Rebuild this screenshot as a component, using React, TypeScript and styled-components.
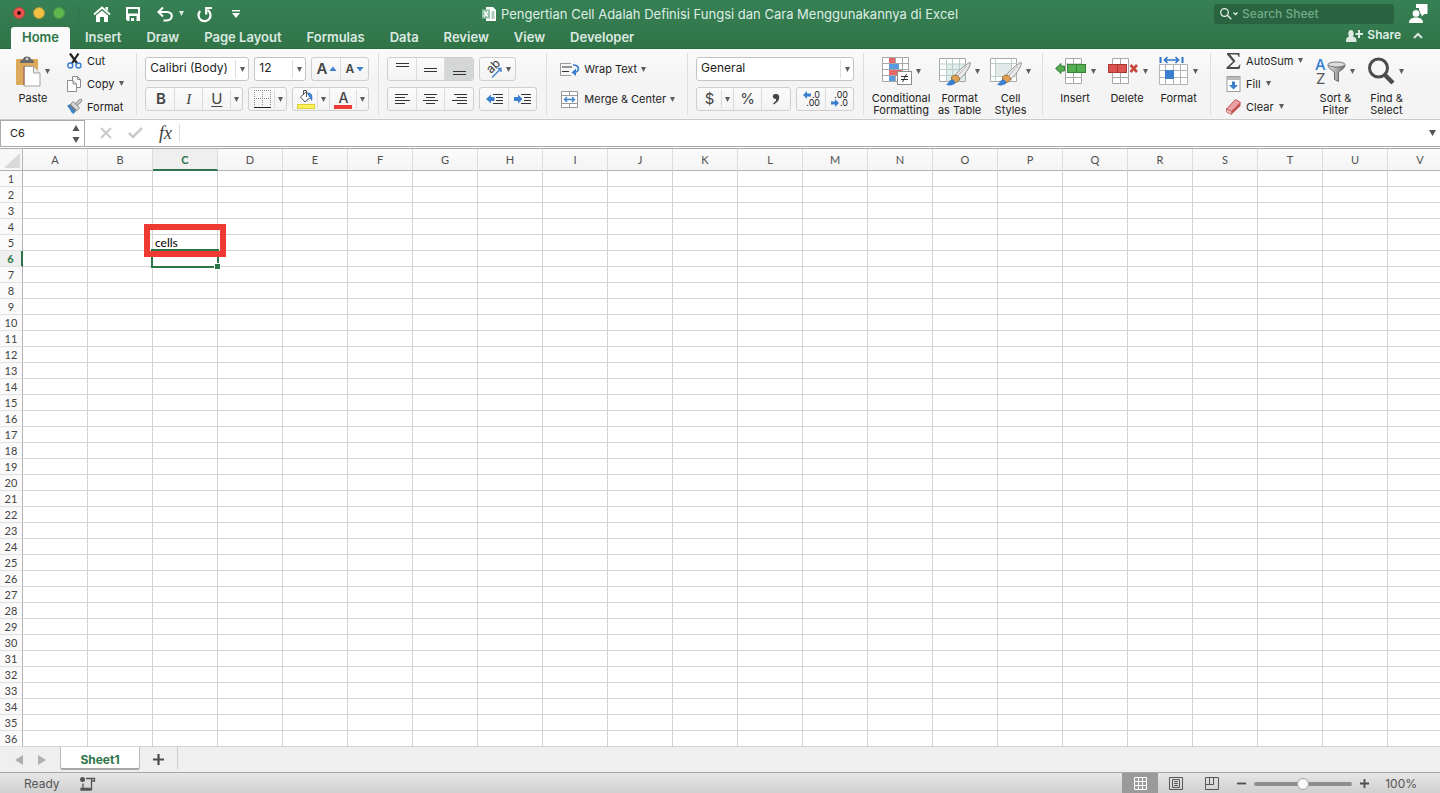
import React from "react";
import styled, { createGlobalStyle, css } from "styled-components";

const UI = `Inter, "Liberation Sans", sans-serif`;
const SHEET = `Lato, "Liberation Sans", sans-serif`;

const GlobalStyle = createGlobalStyle`
  *, *::before, *::after { box-sizing: border-box; }
  body { margin: 0; background: #fff; font-family: ${UI}; color: #222; }
  button, input, select { font: inherit; color: inherit; margin: 0; }
  svg { display: block; flex: none; overflow: visible; }
`;

const Window = styled.div`
  display: flex;
  flex-direction: column;
  min-height: 100vh;
  overflow: hidden;
`;

/* ---------- shared controls ---------- */

const PlainButton = styled.button`
  display: flex;
  align-items: center;
  padding: 0;
  border: 0;
  background: none;
`;

const Caret = ({ color = "#5c5c5c" }: { color?: string }) => (
  <svg width="5" height="5" viewBox="0 0 5 5" aria-hidden="true">
    <path d="M0 0H5L2.5 5Z" fill={color} />
  </svg>
);

/* ---------- title bar ---------- */

const Header = styled.header`
  height: 49px;
  background: linear-gradient(#378055, #307447);
  border-bottom: 1px solid #2a6640;
  color: #dfeee5;
`;

const TitleRow = styled.div`
  display: grid;
  grid-template-columns: 1fr auto 1fr;
  align-items: center;
  height: 27px;
`;

const QuickTools = styled.div`
  display: flex;
  align-items: center;
  padding-left: 13px;
`;

const Lights = styled.div`
  display: flex;
  align-items: center;
  gap: 8px;
  height: 15px;
  padding: 0 13px 2px 0;
  margin-right: 14px;
  border-right: 1px solid #2f7149;
`;

const Light = styled.button<{ $fill: string; $rim: string }>`
  display: grid;
  place-items: center;
  width: 12px;
  height: 12px;
  padding: 0;
  border: 1px solid ${(p) => p.$rim};
  border-radius: 50%;
  background: ${(p) => p.$fill};
`;

const Dot = styled.span`
  width: 4px;
  height: 4px;
  border-radius: 50%;
  background: #3c0a08;
`;

const ToolButton = styled(PlainButton)<{ $gap: number }>`
  margin-right: ${(p) => p.$gap}px;
`;

const DocTitle = styled.h1`
  display: flex;
  align-items: center;
  gap: 5px;
  margin: 0;
  font-size: 13px;
  font-weight: 400;
  line-height: 16px;
  white-space: nowrap;
`;

const TitleRight = styled.div`
  display: flex;
  align-items: center;
  justify-content: flex-end;
  gap: 15px;
  padding-right: 12px;
`;

const SearchBox = styled.label`
  display: flex;
  align-items: center;
  width: 180px;
  height: 20px;
  padding-left: 6px;
  gap: 3px;
  border-radius: 3px;
  background: #2a6340;
`;

const SearchInput = styled.input`
  flex: 1;
  min-width: 0;
  padding: 0;
  border: 0;
  background: none;
  font-size: 12px;
  font-weight: 500;
  line-height: 16px;
  &::placeholder { color: #72ab87; opacity: 1; }
`;

const TabRow = styled.div`
  display: flex;
  justify-content: space-between;
  height: 22px;
`;

const Tabs = styled.nav`
  display: flex;
  padding-left: 11px;
`;

const Tab = styled.button<{ $active?: boolean }>`
  padding: 0 13px 3px 12px;
  border: 0;
  border-radius: 3px 3px 0 0;
  background: none;
  color: #dbe9e0;
  font-size: 13px;
  font-weight: 600;
  line-height: 18px;
  white-space: nowrap;
  ${(p) =>
    p.$active &&
    css`
      padding: 0 11px 3px;
      margin-right: 3px;
      background: #fafafa;
      color: #2b7547;
    `}
`;

const ShareArea = styled.div`
  display: flex;
  align-items: center;
  gap: 12px;
  padding-right: 17px;
  padding-bottom: 6px;
`;

const ShareButton = styled(PlainButton)`
  gap: 4px;
  font-size: 12px;
  font-weight: 600;
  line-height: 16px;
`;

/* ---------- ribbon ---------- */

const Ribbon = styled.section`
  display: flex;
  height: 71px;
  background: linear-gradient(#fafafa, #f4f4f4 30px);
  border-bottom: 1px solid #cbcbcb;
  overflow: hidden;
`;

const Group = styled.div<{ $left?: number; $right?: number; $gap?: number }>`
  display: flex;
  flex: none;
  gap: ${(p) => p.$gap ?? 10}px;
  padding-left: ${(p) => p.$left ?? 8}px;
  padding-right: ${(p) => p.$right ?? 9}px;
`;

const Divider = styled.div`
  flex: none;
  width: 1px;
  height: 62px;
  margin-top: 4px;
  background: #dedede;
`;

const Rows = styled.div`
  display: flex;
  flex-direction: column;
  gap: 6px;
  padding-top: 8px;
`;

const Row = styled.div`
  display: flex;
  gap: 5px;
  height: 24px;
`;

const ButtonSet = styled.div`
  display: flex;
  height: 24px;
  border: 1px solid #cfcfcf;
  border-radius: 3px;
  background: linear-gradient(#fbfbfb, #f3f3f3);
  overflow: hidden;
`;

const SetButton = styled.button<{ $w?: number; $pressed?: boolean }>`
  display: flex;
  align-items: center;
  justify-content: center;
  gap: 2px;
  width: ${(p) => p.$w ?? 29}px;
  padding: 0;
  border: 0;
  border-left: 1px solid #dcdcdc;
  background: ${(p) => (p.$pressed ? "#d5d7d6" : "none")};
  color: #444;
  font-size: 15px;
  line-height: 20px;
  &:first-child { border-left-color: transparent; }
`;

const CaretButton = styled.button`
  display: flex;
  align-items: center;
  justify-content: center;
  align-self: center;
  width: 12px;
  height: 18px;
  padding: 0;
  border: 0;
  border-left: 1px solid #dcdcdc;
  background: none;
`;

const SelectBox = styled.label<{ $w: number }>`
  display: grid;
  grid-template-columns: 1fr 13px;
  align-items: center;
  width: ${(p) => p.$w}px;
  height: 24px;
  border: 1px solid #c4c4c4;
  border-radius: 3px;
  background: #fff;
`;

const Select = styled.select`
  grid-area: 1 / 1 / 2 / 3;
  width: 100%;
  height: 22px;
  padding: 0 14px 2px 4px;
  border: 0;
  background: none;
  appearance: none;
  font-size: 12px;
  line-height: 20px;
`;

const SelectCaret = styled.span`
  grid-area: 1 / 2;
  display: flex;
  align-items: center;
  justify-content: center;
  height: 18px;
  border-left: 1px solid #dedede;
  pointer-events: none;
`;

const MenuList = styled.div`
  display: flex;
  flex-direction: column;
`;

const MenuButton = styled(PlainButton)<{ $tall?: boolean }>`
  height: ${(p) => (p.$tall ? 24 : 23)}px;
  gap: ${(p) => (p.$tall ? 4 : 5)}px;
  font-size: 11px;
  line-height: 14px;
  color: #222;
  white-space: nowrap;
`;

const BigButton = styled.button<{ $w: number }>`
  display: flex;
  flex-direction: column;
  align-items: center;
  width: ${(p) => p.$w}px;
  padding: 6px 0 0;
  border: 0;
  background: none;
  color: #222;
`;

const BigIcon = styled.span`
  display: flex;
  align-items: center;
  gap: 4px;
  height: 32px;
  margin-bottom: 5px;
`;

const BigLabel = styled.span`
  font-size: 11px;
  line-height: 12px;
  white-space: pre;
  text-align: center;
`;

const Glyph = styled.span<{ $italic?: boolean; $bold?: boolean; $underline?: boolean; $small?: boolean }>`
  font-family: ${(p) => (p.$italic ? `"Liberation Serif", serif` : UI)};
  font-size: ${(p) => (p.$small ? 12 : 15)}px;
  font-style: ${(p) => (p.$italic ? "italic" : "normal")};
  font-weight: ${(p) => (p.$bold ? 600 : 400)};
  text-decoration: ${(p) => (p.$underline ? "underline" : "none")};
  text-underline-offset: 2px;
`;

/* ---------- formula bar ---------- */

const FormulaBar = styled.div`
  display: flex;
  height: 29px;
  border-bottom: 3px double #a9a9a9;
  background: #fff;
`;

const NameBox = styled.label`
  display: flex;
  align-items: center;
  width: 85px;
  padding-right: 4px;
  border: 1px solid #a9a9a9;
  border-width: 1px 1px 0;
`;

const NameInput = styled.input`
  flex: 1;
  min-width: 0;
  padding: 0 0 2px 9px;
  border: 0;
  background: none;
  font-size: 11px;
  line-height: 16px;
`;

const FormulaTools = styled.div`
  display: flex;
  align-items: center;
  gap: 16px;
  padding: 0 7px 0 15px;
  margin: 4px 0;
  border-right: 1px solid #dedede;
`;

const FxButton = styled(PlainButton)`
  font-family: "Liberation Serif", serif;
  font-style: italic;
  font-size: 18px;
  line-height: 18px;
  color: #3c3c3c;
`;

const FormulaInput = styled.input`
  flex: 1;
  min-width: 0;
  border: 0;
  padding: 0 8px;
  background: none;
  font-size: 12px;
`;

const ExpandButton = styled(PlainButton)`
  padding-right: 4px;
`;

/* ---------- grid ---------- */

const Sheet = styled.main`
  position: relative;
  flex: 1;
  overflow: hidden;
  font-family: ${SHEET};
`;

const Table = styled.table`
  width: 1453px;
  table-layout: fixed;
  border-collapse: separate;
  border-spacing: 0;
`;

const Corner = styled.th`
  width: 23px;
  height: 22px;
  padding: 0 2px 2px 4px;
  vertical-align: bottom;
  border-right: 1px solid #b4b4b4;
  border-bottom: 1px solid #b4b4b4;
  background: #f7f7f7;
`;

const ColHead = styled.th<{ $active?: boolean }>`
  width: 65px;
  height: 22px;
  padding: ${(p) => (p.$active ? "2px 0 0" : "1px 0 0")};
  border-right: 1px solid #dcdcdc;
  border-bottom: ${(p) => (p.$active ? "2px solid #2b7547" : "1px solid #b4b4b4")};
  background: ${(p) => (p.$active ? "#efefef" : "linear-gradient(#fbfbfb, #f4f4f4)")};
  color: ${(p) => (p.$active ? "#2b7547" : "#505050")};
  font-size: 11px;
  font-weight: ${(p) => (p.$active ? 700 : 400)};
  line-height: 16px;
`;

const RowHead = styled.th<{ $active?: boolean }>`
  height: 16px;
  padding: 0;
  border-right: ${(p) => (p.$active ? "2px solid #2b7547" : "1px solid #b4b4b4")};
  border-bottom: 1px solid #e2e2e2;
  background: ${(p) => (p.$active ? "#efefef" : "#fafafa")};
  color: ${(p) => (p.$active ? "#2b7547" : "#444")};
  font-size: 11px;
  font-weight: ${(p) => (p.$active ? 700 : 400)};
  line-height: 15px;
  text-align: center;
`;

const Cell = styled.td`
  height: 16px;
  padding: 0 2px;
  border-right: 1px solid #d3d3d3;
  border-bottom: 1px solid #d3d3d3;
  background: #fff;
  color: #000;
  font-size: 12px;
  line-height: 15px;
`;

const Selection = styled.div`
  position: absolute;
  left: 151px;
  top: 100px;
  width: 68px;
  height: 19px;
  border: 2px solid #2b7547;
`;

const FillHandle = styled.span`
  position: absolute;
  right: -4px;
  bottom: -4px;
  width: 7px;
  height: 7px;
  border: 1px solid #fff;
  background: #2b7547;
`;

const Highlight = styled.div`
  position: absolute;
  left: 144px;
  top: 75px;
  width: 82px;
  height: 33px;
  border: 6px solid #ee3a32;
`;

/* ---------- bottom bars ---------- */

const SheetBar = styled.div`
  display: flex;
  height: 25px;
  background: #efefef;
`;

const SheetNav = styled.div`
  display: flex;
  align-items: center;
  gap: 15px;
  padding: 0 14px 0 15px;
`;

const SheetTab = styled.button`
  width: 80px;
  height: 23px;
  padding: 3px 0 0;
  border: 1px solid #bdbdbd;
  border-top: 0;
  border-bottom: 2px solid #a6a6a6;
  border-radius: 0 0 3px 3px;
  background: #fff;
  color: #2b7547;
  font-size: 12px;
  font-weight: 700;
`;

const AddSheet = styled(PlainButton)`
  justify-content: center;
  width: 38px;
  height: 22px;
  padding-top: 3px;
  border-right: 1px solid #cfcfcf;
`;

const StatusBar = styled.footer`
  display: flex;
  align-items: center;
  justify-content: space-between;
  height: 22px;
  border-top: 1px solid #a6a6a6;
  background: linear-gradient(#e6e6e6, #cfcfcf);
  color: #555;
  font-size: 12px;
  line-height: 16px;
`;

const StatusLeft = styled.div`
  display: flex;
  align-items: center;
  gap: 20px;
  padding-left: 24px;
`;

const StatusRight = styled.div`
  display: flex;
  align-items: center;
  align-self: stretch;
  padding-right: 23px;
`;

const ViewButton = styled.button<{ $active?: boolean }>`
  display: flex;
  align-items: center;
  justify-content: center;
  align-self: stretch;
  width: 36px;
  padding: 0;
  border: 0;
  background: ${(p) => (p.$active ? "#9a9a9a" : "none")};
`;

const ZoomControls = styled.div`
  display: flex;
  align-items: center;
  gap: 8px;
  margin-left: 7px;
`;

const ZoomSlider = styled.input`
  width: 98px;
  height: 14px;
  margin: 0;
  appearance: none;
  background: none;
  &::-webkit-slider-runnable-track {
    height: 4px;
    border-radius: 2px;
    background: #8e8e8e;
  }
  &::-webkit-slider-thumb {
    appearance: none;
    width: 12px;
    height: 12px;
    margin-top: -4px;
    border: 1px solid #a0a0a0;
    border-radius: 50%;
    background: #fafafa;
  }
`;

const ZoomValue = styled.output`
  margin-left: 8px;
`;

/* ---------- icons ---------- */

const IconHome = () => (
  <svg width="18" height="16" viewBox="0 0 18 16">
    <path d="M1 8.5 9 1.5 17 8.5" fill="none" stroke="#fff" strokeWidth="1.800" />
    <path d="M12.500 1H15V5L12.500 3Z" fill="#fff" />
    <path d="M3 9.500 9 4.500 15 9.500V16H11V11H7V16H3Z" fill="#fff" />
  </svg>
);

const IconSave = () => (
  <svg width="14" height="14" viewBox="0 0 14 14">
    <path fillRule="evenodd" fill="#fff" d="M0 0H14V14H1.500L0 12.500ZM2 2V6.500H12V2ZM3.500 9V14H5V11H8V14H10.500V9Z" />
  </svg>
);

const IconUndo = () => (
  <svg width="17" height="16" viewBox="0 0 17 16" fill="none" stroke="#fff" strokeWidth="2">
    <path d="M2 6H10C16.500 6 16.500 14 9.500 14.500H6.500" />
    <path d="M6 1.500 1.500 6 6 10.500" />
  </svg>
);

const IconRedo = () => (
  <svg width="16" height="16" viewBox="0 0 16 16" fill="none" stroke="#fff" strokeWidth="2.200">
    <path d="M3.200 5A6 6 0 1 0 10.500 4" />
    <path d="M9.200 8.500V2H15" />
  </svg>
);

const IconCustomize = () => (
  <svg width="8" height="8" viewBox="0 0 8 8">
    <path d="M0 0H8V1.500H0ZM0 3H8L4 8Z" fill="#fff" />
  </svg>
);

const IconWorkbook = () => (
  <svg width="14" height="14" viewBox="0 0 14 14">
    <path d="M4 0H11L14 3V14H4Z" fill="#fff" />
    <path d="M9.500 5H12.500M9.500 7H12.500M9.500 9H12.500M9.500 11H12.500" stroke="#5f9f7a" />
    <path d="M0 2.500H8V11.500H0Z" fill="#8fc0a2" />
    <path d="M2 4.500 6 9.500M6 4.500 2 9.500" stroke="#fff" strokeWidth="1.300" />
  </svg>
);

const IconSearch = () => (
  <svg width="19" height="12" viewBox="0 0 19 12" fill="none" stroke="#e6f1ea" strokeWidth="1.300">
    <circle cx="4.500" cy="4.500" r="3.800" />
    <path d="M7.300 7.300 11.300 11.300M13.500 4.500 15.500 6.500 17.500 4.500" />
  </svg>
);

const IconPerson = () => (
  <svg width="19" height="19" viewBox="0 0 19 19">
    <path d="M7 0H18.500V10H15.500L12.500 12.500V10H10V4H7Z" fill="#fff" />
    <circle cx="7" cy="9.500" r="4" fill="#fff" stroke="#347a50" />
    <path d="M0 19C0 15 3 13.500 7 13.500S14 15 14 19Z" fill="#fff" />
  </svg>
);

const IconShare = () => (
  <svg width="17" height="13" viewBox="0 0 17 13" fill="#dbe9e0">
    <path d="M5 1C8.500 1 8 7 6.800 7.500 10 8.500 10.500 9 10.500 13H0C0 9 .5 8.500 3.200 7.500 2 7 1.500 1 5 1Z" />
    <path d="M12 1H14V4H17V6H14V9H12V6H9.500V4H12Z" />
  </svg>
);

const IconChevronUp = () => (
  <svg width="10" height="7" viewBox="0 0 10 7" fill="none" stroke="#dbe9e0" strokeWidth="2">
    <path d="M1 6 5 2 9 6" />
  </svg>
);

const IconPaste = () => (
  <svg width="25" height="32" viewBox="0 0 25 32">
    <rect x="0" y="4" width="22" height="26" rx="1" fill="#dda95b" />
    <path d="M4 8C4 5 6 4.500 7 4.500 7 .5 15 .5 15 4.500 16 4.500 18 5 18 8Z" fill="#6a6a6a" />
    <circle cx="11" cy="4" r="1.300" fill="#ddd" />
    <path d="M8 11.500H17.500L24 18V31H8Z" fill="#fff" stroke="#a3a3a3" />
    <path d="M17.500 11.500V18H24" fill="#eee" stroke="#a3a3a3" />
    <path d="M8 11V30" stroke="#a5533e" />
  </svg>
);

const IconCut = () => (
  <svg width="15" height="16" viewBox="0 0 15 16" fill="none">
    <path d="M3 .5 10.500 11M11.500 .5 4.500 11" stroke="#222" strokeWidth="2.200" />
    <circle cx="3.300" cy="12.500" r="2.500" stroke="#3b7fce" strokeWidth="1.400" />
    <circle cx="11.500" cy="12.500" r="2.500" stroke="#3b7fce" strokeWidth="1.400" />
  </svg>
);

const IconCopy = () => (
  <svg width="15" height="16" viewBox="0 0 15 16" fill="#fff" stroke="#8a8a8a">
    <path d="M5.500 .5H10.500L13.500 3.500V11.500H5.500Z" />
    <path d="M.5 4.500H6L9.500 8V15.500H.5Z" />
    <path d="M6 4.500V8H9.500M10.500 .5V3.500H13.500" fill="none" />
  </svg>
);

const IconFormatPainter = () => (
  <svg width="15" height="15" viewBox="0 0 15 15">
    <path d="M13.500 1.500 9 6" stroke="#8a8a8a" strokeWidth="3.500" strokeLinecap="round" />
    <path d="M13.500 1.500 9 6" stroke="#dcdcdc" strokeWidth="1.500" strokeLinecap="round" />
    <path d="M6 2.500 12.500 9 9.500 12 3.500 5.500Z" fill="#d8d8d8" stroke="#888" />
    <path d="M3.500 5 9.500 11.500 6.500 15 4 13 3.500 11.500 0 6.500Z" fill="#3f86c8" />
    <path d="M3.500 5 9.500 11.500 8.500 12.500 2 6Z" fill="#7c7c7c" />
  </svg>
);

const IconFontSize = ({ grow }: { grow?: boolean }) => (
  <svg width="8" height="6" viewBox="0 0 8 6">
    <path d={grow ? "M.5 5H7.500L4 .5Z" : "M.5 1H7.500L4 5.500Z"} fill="#3b7fce" />
  </svg>
);

const IconBorders = () => (
  <svg width="17" height="18" viewBox="0 0 17 18" fill="none">
    <path d="M0 .5H17M0 8.500H17M.5 0V16M8.500 0V16M16.500 0V16" stroke="#8a8a8a" strokeDasharray="1 1" />
    <path d="M0 17.500H17" stroke="#222" />
  </svg>
);

const IconFill = () => (
  <svg width="18" height="20" viewBox="0 0 18 20">
    <path d="M3.500 8 9 3 14 8 8 13Z" fill="#fff" stroke="#555" />
    <path d="M6.500 6V1.500H9.500V8" fill="none" stroke="#555" />
    <path d="M10 3.500C15.500 3 16 8 15 12 13.500 11 13 9 12.500 7.500L9 12 8 12.500 12 8Z" fill="#3b7fce" />
    <rect x=".5" y="15.500" width="17" height="4" fill="#fdf151" stroke="#d9cf3c" />
  </svg>
);

const ColorLetter = styled.span`
  display: flex;
  flex-direction: column;
  align-items: center;
  width: 18px;
  border-bottom: 4px solid #ee3a32;
  font-size: 14px;
  font-weight: 500;
  line-height: 15px;
`;

type Line = [number, number, number];

const LineIcon = ({ lines }: { lines: Line[] }) => (
  <svg width="15" height="18" viewBox="0 0 15 18" stroke="#333">
    {lines.map(([x1, x2, y]) => (
      <path key={y} d={`M${x1} ${y + 0.5}H${x2}`} />
    ))}
  </svg>
);

const IconIndent = ({ out }: { out?: boolean }) => (
  <svg width="18" height="12" viewBox="0 0 18 12">
    <path d="M7 1.500H17M10 4.500H17M10 7.500H17M7 10.500H17" stroke="#333" />
    <path
      d={out ? "M0 6 5 1.500V4H8.500V8H5V10.500Z" : "M8.500 6 4 1.500V4H0V8H4V10.500Z"}
      fill="#3b7fce"
    />
  </svg>
);

const IconOrientation = () => (
  <svg width="19" height="18" viewBox="0 0 19 18">
    <text transform="translate(6 14) rotate(-45)" fontFamily="Inter, sans-serif" fontSize="12" fill="#333">
      ab
    </text>
    <path d="M7 17.500 16 8.500M12.500 8.500H16V12" fill="none" stroke="#3b7fce" strokeWidth="1.300" />
  </svg>
);

const IconWrap = () => (
  <svg width="20" height="13" viewBox="0 0 20 13" fill="none">
    <path d="M11 .5H.5V12.500H11" stroke="#9a9a9a" />
    <path d="M2 4H12M2 8.500H9" stroke="#333" />
    <path d="M13 2C20 1.500 20 9.500 14 9.500" stroke="#3b7fce" strokeWidth="1.700" />
    <path d="M16 5.500 11.500 9.500 16 13Z" fill="#3b7fce" />
  </svg>
);

const IconMerge = () => (
  <svg width="20" height="17" viewBox="-1 0 20 17">
    <path d="M.5 .5H16.500V16.500H.5ZM.5 4.500H16.500M.5 12.500H16.500M8.500 .5V4.500M8.500 12.500V16.500" fill="#fff" stroke="#9a9a9a" />
    <path d="M4 8.500H13M6 6 3.500 8.500 6 11M11 6 13.500 8.500 11 11" fill="none" stroke="#3b7fce" strokeWidth="1.300" />
  </svg>
);

const IconDecimal = ({ more }: { more?: boolean }) => (
  <svg width="20" height="18" viewBox="0 0 20 18" fontFamily="Inter, sans-serif" fontSize="9" fill="#222">
    <text x="18" y="8" textAnchor="end">{more ? ".0" : ".00"}</text>
    <text x="18" y="16" textAnchor="end">{more ? ".00" : ".0"}</text>
    <path
      d={more ? "M1 5 5 1V3.500H9V6.500H5V9Z" : "M9 13 5 9V11.500H1V14.500H5V17Z"}
      fill="#3b7fce"
    />
  </svg>
);

const IconComma = () => (
  <svg width="8" height="12" viewBox="0 0 8 12">
    <path d="M3 1C6 .5 8 2.500 7 6 6.300 8.500 4 10.500 1.500 11.500 1 10.500 1.500 10 2 9.500 3.500 8.500 4.500 7.500 4 6 0 6 0 1.500 3 1Z" fill="#444" />
  </svg>
);

const IconConditional = () => (
  <svg width="30" height="29" viewBox="0 0 30 29">
    <path d="M.5 .5H26.500V24.500H.5ZM.5 6.500H26.500M.5 12.500H26.500M.5 18.500H26.500M7.500 .5V24.500M13.500 .5V24.500M20.500 .5V24.500" fill="#fff" stroke="#a8a8a8" />
    <path d="M7 1H13V6H7ZM7 13H20V18H7Z" fill="#e2686a" />
    <path d="M7 7H17V12H7ZM7 19H13V24H7Z" fill="#5a9be0" />
    <rect x="15.500" y="14.500" width="14" height="13" fill="#fff" stroke="#8e8e8e" />
    <path d="M19 19.500H26M19 22.500H26M24.500 17 20.500 25" stroke="#333" />
  </svg>
);

const Brush = () => (
  <>
    <path d="M31 5.500C27 7 20 13 16 18.500L20.500 22.500C26 17.500 30.500 11 31.500 6Z" fill="#e9e9e9" stroke="#8e8e8e" />
    <path d="M28 9C24 12.500 21 16 18.500 20" fill="none" stroke="#b4b4b4" />
    <path d="M12.500 20C14.500 17 20 18 20.500 22 19.500 25.500 15 26.500 13 25Z" fill="#dfa254" stroke="#9c6a33" />
    <path d="M7 27.500C10 26.500 10 22.500 13 22.500 16.500 23 17.500 27 14.500 27.500 11 29 9 28.500 7 27.500Z" fill="#3b7fce" />
  </>
);

const IconTable = () => (
  <svg width="32" height="29" viewBox="0 0 32 29">
    <path d="M.5 1.500H26.500V24.500H.5Z" fill="#fff" stroke="#a8a8a8" />
    <rect x="7" y="7" width="19" height="17" fill="#dfeeea" />
    <path d="M.5 7H26.500M.5 12.500H26.500M.5 18.500H26.500M7.500 1.500V24.500M13.500 1.500V24.500M20.500 1.500V24.500" stroke="#b9cdc8" />
    <Brush />
  </svg>
);

const IconCellStyles = () => (
  <svg width="32" height="29" viewBox="0 0 32 29">
    <path d="M.5 1.500H26.500V24.500H.5Z" fill="#fff" stroke="#a8a8a8" />
    <path d="M.5 6.500H26.500M.5 19.500H26.500M5.500 1.500V24.500M21.500 1.500V24.500" stroke="#bcd0c8" />
    <rect x="6" y="7" width="15" height="12" fill="#e3e8e9" />
    <Brush />
  </svg>
);

const IconInsert = () => (
  <svg width="32" height="28" viewBox="0 0 32 28">
    <path d="M10.500 1.500H26.500V26.500H10.500ZM18.500 1.500V26.500M10.500 7H26.500M10.500 20.500H26.500" fill="#fff" stroke="#a8a8a8" />
    <rect x="12.500" y="7.500" width="18" height="8" fill="#55ad52" stroke="#3c7f3b" />
    <path d="M21.500 7.500V15.500" stroke="#3c7f3b" />
    <path d="M.5 11.500 6 6.500V9H9.500V14H6V16.500Z" fill="#55ad52" stroke="#3c7f3b" />
  </svg>
);

const IconDelete = () => (
  <svg width="32" height="28" viewBox="0 0 32 28">
    <path d="M5.500 1.500H21.500V26.500H5.500ZM13.500 1.500V26.500M5.500 20.500H21.500" fill="#fff" stroke="#a8a8a8" />
    <rect x="1.500" y="7.500" width="18" height="8" fill="#dc5450" stroke="#a83a36" />
    <path d="M10.500 7.500V15.500" stroke="#a83a36" />
    <path d="M23.500 8 30 15M30 8 23.500 15" stroke="#c8473f" strokeWidth="2.600" />
  </svg>
);

const IconFormatCells = () => (
  <svg width="30" height="30" viewBox="0 0 30 30">
    <path d="M.5 8.500H28.500V28.500H.5ZM.5 14.500H28.500M.5 21.500H28.500M6.500 8.500V28.500M14.500 8.500V28.500M21.500 8.500V28.500" fill="#fff" stroke="#b4b4b4" />
    <rect x="6" y="14" width="9" height="9" fill="#3b7fce" />
    <path d="M1.500 1V7M23.500 1V7" stroke="#2f75c6" strokeWidth="2" />
    <path d="M6 4H19M8.500 1 5.500 4 8.500 7M16.500 1 19.500 4 16.500 7" fill="none" stroke="#2f75c6" strokeWidth="1.600" />
  </svg>
);

const IconSum = () => (
  <svg width="15" height="16" viewBox="0 0 15 16">
    <path d="M1 0H13.500V4H12.700C12.200 2 11.500 1.500 10 1.500H4L9.500 8 3.500 14H11C12.500 14 13 13 13.700 11.500H14.500L13.500 16H.5V14.500L7 8.500 1 1.500Z" fill="#4a4a4a" />
  </svg>
);

const IconFillDown = () => (
  <svg width="15" height="16" viewBox="0 0 15 16">
    <rect x="1" y=".5" width="13" height="15" fill="#fff" stroke="#9a9a9a" />
    <path d="M1 1H14V4H1Z" fill="#b9b9b9" />
    <path d="M6 5.500H9V9H12L7.500 13.500 3 9H6Z" fill="#3b7fce" />
  </svg>
);

const IconEraser = () => (
  <svg width="15" height="16" viewBox="0 0 15 16">
    <path d="M.5 10 9.500 .5 14.500 3.500 5.500 12.500Z" fill="#eda0a4" stroke="#b9585a" />
    <path d="M5.500 12.500 14.500 3.500V7L5.500 15.500Z" fill="#c5534f" />
    <path d="M.5 10 5.500 12.500V15.500L.5 13Z" fill="#f2c4c5" stroke="#b9585a" strokeWidth=".8" />
  </svg>
);

const IconSort = () => (
  <svg width="31" height="28" viewBox="0 0 31 28">
    <defs>
      <linearGradient id="funnel">
        <stop offset="0" stopColor="#e6e6e6" />
        <stop offset="1" stopColor="#6a6a6a" />
      </linearGradient>
    </defs>
    <text x="0" y="13" fontFamily="Inter, sans-serif" fontSize="15" fontWeight="500" fill="#2f7bd0">A</text>
    <text x="1" y="27" fontFamily="Inter, sans-serif" fontSize="15" fill="#555">Z</text>
    <path d="M13 8C13 12 19.500 14 19.500 16V22.500L23.500 24.500V16C23.500 14 30 12 30 8Z" fill="url(#funnel)" stroke="#6a6a6a" />
    <ellipse cx="21.500" cy="7.500" rx="8.500" ry="2.500" fill="#ddd" stroke="#777" />
  </svg>
);

const IconFind = () => (
  <svg width="27" height="28" viewBox="0 0 27 28" fill="none">
    <circle cx="10.500" cy="11" r="9" stroke="#4c4c4c" strokeWidth="3" />
    <path d="M16.500 17.500 25 26" stroke="#4c4c4c" strokeWidth="4.500" />
  </svg>
);

const IconSpinner = () => (
  <svg width="8" height="19" viewBox="0 0 8 19" fill="#555">
    <path d="M4 1 7.500 7H.5ZM.5 13H7.500L4 19Z" />
  </svg>
);

const IconCancel = () => (
  <svg width="12" height="12" viewBox="0 0 12 12" stroke="#cacaca" strokeWidth="2">
    <path d="M1 1 11 11M11 1 1 11" />
  </svg>
);

const IconAccept = () => (
  <svg width="15" height="12" viewBox="0 0 15 12" fill="none" stroke="#cacaca" strokeWidth="2.500">
    <path d="M1 6 5 10 14 1" />
  </svg>
);

const IconArrow = ({ left }: { left?: boolean }) => (
  <svg width="8" height="10" viewBox="0 0 8 10" fill="#b0b0b0">
    <path d={left ? "M8 0V10L0 5Z" : "M0 0V10L8 5Z"} />
  </svg>
);

const IconMacro = () => (
  <svg width="15" height="14" viewBox="0 0 15 14" fill="none" stroke="#555">
    <circle cx="2.500" cy="2.500" r="2.500" fill="#555" stroke="none" />
    <path d="M6 1.500H14.500V4H11.500V12.500C11.500 13.500 10 13.500 10 11.500H1V13H10.500M3 6.500V11.500M11.500 4V1.500" strokeWidth="1.300" />
  </svg>
);

const IconGridView = () => (
  <svg width="13" height="13" viewBox="0 0 13 13" fill="none" stroke="#fff">
    <path d="M.5 .5H12.500V12.500H.5ZM4.500 .5V12.500M8.500 .5V12.500M.5 4.500H12.500M.5 8.500H12.500" />
  </svg>
);

const IconPageView = () => (
  <svg width="14" height="13" viewBox="0 0 14 13" fill="none" stroke="#555">
    <path d="M.5 .5H13.500V12.500H.5ZM3.500 2.500H10.500V10.500H3.500ZM5 4.500H9M5 6.500H9M5 8.500H9" />
  </svg>
);

const IconBreakView = () => (
  <svg width="14" height="13" viewBox="0 0 14 13" fill="none" stroke="#555">
    <path d="M.5 .5H13.500V12.500H.5ZM.5 7.500H8.500V.5M4.500 .5V7.500" />
  </svg>
);

const IconSign = ({ plus, size = 9 }: { plus?: boolean; size?: number }) => (
  <svg width={size} height={size} viewBox="0 0 9 9" stroke="#4e4e4e" strokeWidth="1.800">
    <path d={plus ? "M0 4.500H9M4.500 0V9" : "M0 4.500H9"} />
  </svg>
);

/* ---------- composed pieces ---------- */

const Dropdown = ({ label, value, width }: { label: string; value: string; width: number }) => (
  <SelectBox $w={width}>
    <Select aria-label={label} defaultValue={value}>
      <option>{value}</option>
    </Select>
    <SelectCaret><Caret /></SelectCaret>
  </SelectBox>
);

const Big = ({ icon, label, width }: { icon: React.ReactNode; label: string; width: number }) => (
  <BigButton $w={width}>
    <BigIcon>{icon}<Caret /></BigIcon>
    <BigLabel>{label}</BigLabel>
  </BigButton>
);

const TABS = ["Home", "Insert", "Draw", "Page Layout", "Formulas", "Data", "Review", "View", "Developer"];
const COLUMNS = "ABCDEFGHIJKLMNOPQRSTUV".split("");
const ROW_COUNT = 36;
const VALUES: Record<string, string> = { C5: "cells" };

const V_TOP: Line[] = [[1, 14, 3], [1, 14, 6]];
const V_MID: Line[] = [[1, 14, 8], [1, 14, 11]];
const V_BOT: Line[] = [[1, 14, 11], [1, 14, 14]];
const A_LEFT: Line[] = [[0, 13, 4], [0, 10, 7], [0, 15, 10], [0, 10, 13]];
const A_CENTER: Line[] = [[1, 14, 4], [3, 12, 7], [0, 15, 10], [3, 12, 13]];
const A_RIGHT: Line[] = [[2, 15, 4], [5, 15, 7], [0, 15, 10], [5, 15, 13]];

export default function App() {
  return (
    <Window>
      <GlobalStyle />
      <Header>
        <TitleRow>
          <QuickTools>
            <Lights>
              <Light aria-label="Close" $fill="#ed5650" $rim="#b8443f"><Dot /></Light>
              <Light aria-label="Minimize" $fill="#f2c144" $rim="#a99a3a" />
              <Light aria-label="Full screen" $fill="#5fb64e" $rim="#4c9a45" />
            </Lights>
            <ToolButton $gap={15} aria-label="Start"><IconHome /></ToolButton>
            <ToolButton $gap={17} aria-label="Save"><IconSave /></ToolButton>
            <ToolButton $gap={5} aria-label="Undo"><IconUndo /></ToolButton>
            <ToolButton $gap={13} aria-label="Undo history"><Caret color="#dbe9e0" /></ToolButton>
            <ToolButton $gap={19} aria-label="Redo"><IconRedo /></ToolButton>
            <ToolButton $gap={0} aria-label="Customize toolbar"><IconCustomize /></ToolButton>
          </QuickTools>
          <DocTitle>
            <IconWorkbook />
            Pengertian Cell Adalah Definisi Fungsi dan Cara Menggunakannya di Excel
          </DocTitle>
          <TitleRight>
            <SearchBox>
              <IconSearch />
              <SearchInput aria-label="Search sheet" placeholder="Search Sheet" />
            </SearchBox>
            <PlainButton aria-label="Account"><IconPerson /></PlainButton>
          </TitleRight>
        </TitleRow>
        <TabRow>
          <Tabs>
            {TABS.map((t, i) => (
              <Tab key={t} $active={i === 0}>{t}</Tab>
            ))}
          </Tabs>
          <ShareArea>
            <ShareButton><IconShare />Share</ShareButton>
            <PlainButton aria-label="Collapse ribbon"><IconChevronUp /></PlainButton>
          </ShareArea>
        </TabRow>
      </Header>

      <Ribbon>
        <Group $left={14} $right={12} $gap={15}>
          <Big icon={<IconPaste />} label="Paste" width={38} />
          <MenuList>
            <MenuButton><IconCut />Cut</MenuButton>
            <MenuButton><IconCopy />Copy<Caret /></MenuButton>
            <MenuButton><IconFormatPainter />Format</MenuButton>
          </MenuList>
        </Group>
        <Divider />
        <Group>
          <Rows>
            <Row>
              <Dropdown label="Font" value="Calibri (Body)" width={104} />
              <Dropdown label="Font size" value="12" width={52} />
              <ButtonSet>
                <SetButton $w={28} aria-label="Increase font size"><Glyph $bold>A</Glyph><IconFontSize grow /></SetButton>
                <SetButton $w={28} aria-label="Decrease font size"><Glyph $bold $small>A</Glyph><IconFontSize /></SetButton>
              </ButtonSet>
            </Row>
            <Row>
              <ButtonSet>
                <SetButton $w={28}><Glyph $bold>B</Glyph></SetButton>
                <SetButton $w={28}><Glyph $italic>I</Glyph></SetButton>
                <SetButton $w={28}><Glyph $underline>U</Glyph></SetButton>
                <CaretButton aria-label="Underline styles"><Caret /></CaretButton>
              </ButtonSet>
              <ButtonSet>
                <SetButton $w={25} aria-label="Borders"><IconBorders /></SetButton>
                <CaretButton aria-label="Border styles"><Caret /></CaretButton>
              </ButtonSet>
              <ButtonSet>
                <SetButton $w={24} aria-label="Fill color"><IconFill /></SetButton>
                <CaretButton aria-label="Fill colors"><Caret /></CaretButton>
                <SetButton $w={27} aria-label="Font color"><ColorLetter>A</ColorLetter></SetButton>
                <CaretButton aria-label="Font colors"><Caret /></CaretButton>
              </ButtonSet>
            </Row>
          </Rows>
        </Group>
        <Divider />
        <Group>
          <Rows>
            <Row>
              <ButtonSet>
                <SetButton $w={28} aria-label="Top align"><LineIcon lines={V_TOP} /></SetButton>
                <SetButton $w={28} aria-label="Middle align"><LineIcon lines={V_MID} /></SetButton>
                <SetButton $pressed aria-label="Bottom align"><LineIcon lines={V_BOT} /></SetButton>
              </ButtonSet>
              <ButtonSet>
                <SetButton $w={35} aria-label="Orientation"><IconOrientation /><Caret /></SetButton>
              </ButtonSet>
            </Row>
            <Row>
              <ButtonSet>
                <SetButton $w={28} aria-label="Align left"><LineIcon lines={A_LEFT} /></SetButton>
                <SetButton $w={28} aria-label="Align center"><LineIcon lines={A_CENTER} /></SetButton>
                <SetButton aria-label="Align right"><LineIcon lines={A_RIGHT} /></SetButton>
              </ButtonSet>
              <ButtonSet>
                <SetButton $w={28} aria-label="Decrease indent"><IconIndent out /></SetButton>
                <SetButton $w={28} aria-label="Increase indent"><IconIndent /></SetButton>
              </ButtonSet>
            </Row>
          </Rows>
        </Group>
        <Divider />
        <Group $left={13} $right={12}>
          <Rows>
            <MenuButton $tall><IconWrap />Wrap Text<Caret /></MenuButton>
            <MenuButton $tall><IconMerge />Merge &amp; Center<Caret /></MenuButton>
          </Rows>
        </Group>
        <Divider />
        <Group>
          <Rows>
            <Row>
              <Dropdown label="Number format" value="General" width={158} />
            </Row>
            <Row>
              <ButtonSet>
                <SetButton $w={24}><Glyph>$</Glyph></SetButton>
                <CaretButton aria-label="Currencies"><Caret /></CaretButton>
                <SetButton $w={28}><Glyph>%</Glyph></SetButton>
                <SetButton aria-label="Comma style"><IconComma /></SetButton>
              </ButtonSet>
              <ButtonSet>
                <SetButton $w={28} aria-label="Increase decimals"><IconDecimal more /></SetButton>
                <SetButton $w={28} aria-label="Decrease decimals"><IconDecimal /></SetButton>
              </ButtonSet>
            </Row>
          </Rows>
        </Group>
        <Divider />
        <Group $left={9} $right={11}>
          <Big icon={<IconConditional />} label={"Conditional\nFormatting"} width={56} />
          <Big icon={<IconTable />} label={"Format\nas Table"} width={41} />
          <Big icon={<IconCellStyles />} label={"Cell\nStyles"} width={41} />
        </Group>
        <Divider />
        <Group $left={11} $right={11}>
          <Big icon={<IconInsert />} label="Insert" width={42} />
          <Big icon={<IconDelete />} label="Delete" width={42} />
          <Big icon={<IconFormatCells />} label="Format" width={41} />
        </Group>
        <Divider />
        <Group $left={15} $gap={12}>
          <MenuList>
            <MenuButton><IconSum />AutoSum<Caret /></MenuButton>
            <MenuButton><IconFillDown />Fill<Caret /></MenuButton>
            <MenuButton><IconEraser />Clear<Caret /></MenuButton>
          </MenuList>
          <Big icon={<IconSort />} label={"Sort &\nFilter"} width={40} />
          <Big icon={<IconFind />} label={"Find &\nSelect"} width={38} />
        </Group>
      </Ribbon>

      <FormulaBar>
        <NameBox>
          <NameInput aria-label="Name box" defaultValue="C6" />
          <IconSpinner />
        </NameBox>
        <FormulaTools>
          <PlainButton aria-label="Cancel"><IconCancel /></PlainButton>
          <PlainButton aria-label="Enter"><IconAccept /></PlainButton>
          <FxButton>fx</FxButton>
        </FormulaTools>
        <FormulaInput aria-label="Formula" />
        <ExpandButton aria-label="Expand formula bar">
          <svg width="7" height="6" viewBox="0 0 7 6"><path d="M0 0H7L3.500 6Z" fill="#555" /></svg>
        </ExpandButton>
      </FormulaBar>

      <Sheet>
        <Table>
          <thead>
            <tr>
              <Corner aria-label="Select all">
                <svg width="16" height="15" viewBox="0 0 16 15"><path d="M16 0V15H0Z" fill="#d9d9d9" /></svg>
              </Corner>
              {COLUMNS.map((c) => (
                <ColHead key={c} scope="col" $active={c === "C"}>{c}</ColHead>
              ))}
            </tr>
          </thead>
          <tbody>
            {Array.from({ length: ROW_COUNT }, (_, i) => i + 1).map((r) => (
              <tr key={r}>
                <RowHead scope="row" $active={r === 6}>{r}</RowHead>
                {COLUMNS.map((c) => (
                  <Cell key={c}>{VALUES[c + r]}</Cell>
                ))}
              </tr>
            ))}
          </tbody>
        </Table>
        <Selection><FillHandle /></Selection>
        <Highlight />
      </Sheet>

      <SheetBar>
        <SheetNav>
          <PlainButton aria-label="Previous sheet"><IconArrow left /></PlainButton>
          <PlainButton aria-label="Next sheet"><IconArrow /></PlainButton>
        </SheetNav>
        <SheetTab>Sheet1</SheetTab>
        <AddSheet aria-label="Add sheet"><IconSign plus size={11} /></AddSheet>
      </SheetBar>

      <StatusBar>
        <StatusLeft>
          <span>Ready</span>
          <PlainButton aria-label="Record macro"><IconMacro /></PlainButton>
        </StatusLeft>
        <StatusRight>
          <ViewButton $active aria-label="Normal view"><IconGridView /></ViewButton>
          <ViewButton aria-label="Page layout view"><IconPageView /></ViewButton>
          <ViewButton aria-label="Page break preview"><IconBreakView /></ViewButton>
          <ZoomControls>
            <PlainButton aria-label="Zoom out"><IconSign /></PlainButton>
            <ZoomSlider type="range" aria-label="Zoom" min={0} max={200} defaultValue={100} />
            <PlainButton aria-label="Zoom in"><IconSign plus /></PlainButton>
            <ZoomValue>100%</ZoomValue>
          </ZoomControls>
        </StatusRight>
      </StatusBar>
    </Window>
  );
}
